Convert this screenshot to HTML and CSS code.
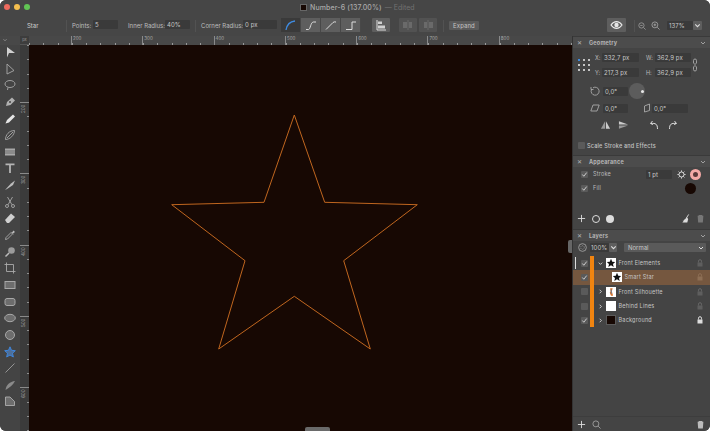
FILE: index.html
```html
<!DOCTYPE html>
<html lang="en">
<head>
    <meta charset="UTF-8">
    <meta name="viewport" content="width=device-width, initial-scale=1.0">
    <title>Number-6</title>
    <link rel="stylesheet" href="styles.css">
</head>
<body>
<div class="window">
    <!-- Title bar -->
    <div class="titlebar">
        <span class="light red"></span>
        <span class="light yellow"></span>
        <span class="light green"></span>
        <span class="doc-icon"></span>
        <span class="doc-name">Number-6 (137.00%)</span>
        <span class="doc-state">— Edited</span>
    </div>

    <!-- Context toolbar -->
    <div class="toolbar">
        <span class="tb-tool">Star</span>
        <span class="tb-sep sep-a"></span>
        <span class="tb-label">Points:</span>
        <span class="field f-points">5</span>
        <span class="tb-label l-inner">Inner Radius:</span>
        <span class="field f-inner">40%</span>
        <span class="tb-sep sep-b"></span>
        <span class="tb-label l-corner">Corner Radius:</span>
        <span class="field f-corner">0 px</span>
        <div class="segments">
            <button class="seg seg-on"><svg viewBox="0 0 20 14"><path d="M5 12C6 6 9 3.500 14 3" class="st-blue"/></svg></button>
            <button class="seg"><svg viewBox="0 0 20 14"><path d="M5 11.500H7.500C9.500 11.500 9.500 4 12.500 4H15" class="st-light"/></svg></button>
            <button class="seg"><svg viewBox="0 0 20 14"><path d="M5 11.500L12 4.500Q13 3.500 15 4" class="st-light"/></svg></button>
            <button class="seg"><svg viewBox="0 0 20 14"><path d="M5 11.500H11V4H15" class="st-light"/></svg></button>
        </div>
        <button class="tb-btn b-align"><svg viewBox="0 0 18 14"><path d="M5 2V12H14" class="st-light"/><rect x="6" y="3.500" width="4" height="2.500" fill="#cfcfcf"/><rect x="6" y="7.500" width="7" height="3" fill="#cfcfcf"/></svg></button>
        <button class="tb-btn b-dim1"><svg viewBox="0 0 18 14"><path d="M9 2V12" class="st-dim"/><rect x="4" y="4" width="4" height="6" fill="#6a6a6a"/><rect x="10" y="4" width="3" height="6" fill="#6a6a6a"/></svg></button>
        <button class="tb-btn b-dim2"><svg viewBox="0 0 18 14"><path d="M9 2V12" class="st-dim"/><rect x="5" y="4" width="3" height="6" fill="#6a6a6a"/><rect x="10" y="4" width="4" height="6" fill="#6a6a6a"/></svg></button>
        <span class="tb-sep sep-c"></span>
        <button class="tb-text-btn">Expand</button>
        <span class="tb-spacer"></span>
        <button class="tb-btn b-eye"><svg viewBox="0 0 19 14"><path d="M4 7C7 2.500 12 2.500 15 7C12 11.500 7 11.500 4 7Z" fill="none" stroke="#e6e6e6" stroke-width="1.200"/><circle cx="9.500" cy="7" r="2.200" fill="#e6e6e6"/></svg></button>
        <span class="tb-sep sep-d"></span>
        <svg class="zoom-ico z-out" viewBox="0 0 10 10"><circle cx="4.300" cy="4.300" r="3.300" class="st-mid"/><path d="M7 7L9.500 9.500M2.800 4.300H5.800" class="st-mid"/></svg>
        <svg class="zoom-ico z-in" viewBox="0 0 10 10"><circle cx="4.300" cy="4.300" r="3.300" class="st-mid"/><path d="M7 7L9.500 9.500M2.800 4.300H5.800M4.300 2.800V5.800" class="st-mid"/></svg>
        <span class="field f-zoom">137%</span>
        <span class="drop-btn"><svg viewBox="0 0 8 8"><path d="M2 3L4 5L6 3" class="st-light"/></svg></span>
    </div>

    <div class="workspace">
        <!-- Tools -->
        <div class="tools-col">
            <div class="tools-head"><svg viewBox="0 0 8 5"><path d="M2 1.500L4 3.500L6 1.500" class="st-mid"/></svg></div>
            <div class="tools">
                <svg viewBox="0 0 12 12"><path d="M3 1L11 7H3Z M3 7V11.500L5 7" fill="#d0d0d0"/></svg>
                <svg viewBox="0 0 12 12"><path d="M3 1L10 7.500L3 11Z" class="st-mid"/></svg>
                <svg viewBox="0 0 12 12"><ellipse cx="6" cy="5" rx="5" ry="3.500" class="st-mid"/><path d="M4 8.500L3.500 11" class="st-mid"/></svg>
                <svg viewBox="0 0 12 12"><path d="M2 10L3 6L8 1.500L11 4.500L6.500 9Z" fill="#b0b0b0"/><circle cx="6" cy="6" r="1" fill="#444"/></svg>
                <svg viewBox="0 0 12 12"><path d="M1.500 10.500L3 7L9 1.500L11 3.500L5 9.500Z" fill="#e6e6e6"/></svg>
                <svg viewBox="0 0 12 12"><path d="M1.500 10.500C1.500 6 5 1.500 10.500 1.500C10.500 6 6 10.500 1.500 10.500Z" class="st-mid"/><path d="M3 9L9 3" class="st-mid"/></svg>
                <svg viewBox="0 0 12 12"><rect x="1" y="2.500" width="10" height="7" fill="#a8a8a8"/><path d="M1 5H11M1 7H11" stroke="#555" stroke-width=".7"/></svg>
                <svg viewBox="0 0 12 12"><path d="M1.500 1.500H10.500V3.200H6.900V11H5.100V3.200H1.500Z" fill="#b4b4b4"/></svg>
                <svg viewBox="0 0 12 12"><path d="M1 11L7 4.500L11 1.500L9 6L3 10Z" fill="#bdbdbd"/></svg>
                <svg viewBox="0 0 12 12"><circle cx="3" cy="10" r="1.500" class="st-mid"/><circle cx="9" cy="10" r="1.500" class="st-mid"/><path d="M4 8.800L8.500 1M8 8.800L3.500 1" class="st-mid"/></svg>
                <svg viewBox="0 0 12 12"><path d="M1 8L7 1.500L11 5L5 11H3Z" fill="#cfcfcf"/></svg>
                <svg viewBox="0 0 12 12"><path d="M1.500 10.500L2 8.500L7 3.500L8.500 5L3.500 10Z" class="st-mid"/><path d="M6.500 2.500L8 3.500L9.500 1.500L11 3L9 4.500L10 6Z" fill="#bbb"/></svg>
                <svg viewBox="0 0 12 12"><circle cx="7.500" cy="4.500" r="3.300" fill="#9c9c9c"/><path d="M5 7L1.500 10.500" stroke="#bbb" stroke-width="1.500" fill="none"/></svg>
                <svg viewBox="0 0 12 12"><path d="M2.500 0.500V9.500H11.500M0.500 2.500H9.500V11.500" class="st-mid"/></svg>
                <svg viewBox="0 0 12 12"><rect x="1" y="2.500" width="10" height="7" fill="#6d6d6d" stroke="#a8a8a8"/></svg>
                <svg viewBox="0 0 12 12"><rect x="1" y="2.500" width="10" height="7" rx="2" fill="#6d6d6d" stroke="#a8a8a8"/></svg>
                <svg viewBox="0 0 12 12"><ellipse cx="6" cy="6" rx="5.300" ry="3.700" fill="#6d6d6d" stroke="#a8a8a8"/></svg>
                <svg viewBox="0 0 12 12"><circle cx="6" cy="6" r="4.500" fill="#6d6d6d" stroke="#a8a8a8"/></svg>
                <svg viewBox="0 0 12 12"><path d="M6 .8L7.500 4.300L11.300 4.700L8.500 7.200L9.300 11L6 9L2.700 11L3.500 7.200L.7 4.700L4.500 4.300Z" fill="#4e6f99" stroke="#3f86dc" stroke-width="1"/></svg>
                <svg viewBox="0 0 12 12"><path d="M1.500 10.500L10.500 1.500" stroke="#a8a8a8" stroke-width=".8" fill="none"/></svg>
                <svg viewBox="0 0 12 12"><path d="M1.500 11C2 6 6 2.500 11 2C9 6 6 8 1.500 11Z" fill="#8a8a8a"/></svg>
                <svg viewBox="0 0 12 12"><path d="M1.500 2H6L10.500 6.500V10.500H1.500Z" fill="#6d6d6d" stroke="#b8b8b8" stroke-width=".8"/></svg>
            </div>
        </div>

        <!-- Canvas with rulers -->
        <div class="stage">
            <div class="ruler-top">
                <span class="ruler-px">px</span>
                <div class="hticks">
                    <span>200</span><span>300</span><span>400</span><span>500</span><span>600</span><span>700</span><span>800</span>
                </div>
            </div>
            <div class="stage-body">
                <div class="ruler-left">
                    <span>200</span><span>300</span><span>400</span><span>500</span><span>600</span>
                </div>
                <div class="canvas">
                    <svg class="artwork" viewBox="0 0 543 386">
                        <path class="star" d="M265.300 70L295.700 157.300L388.300 159.700L314.700 215.700L341.300 304L265.300 251.300L189.700 304L216 215.700L142.700 159.700L235 157.300Z"/>
                    </svg>
                    <span class="scroll-handle"></span>
                    <span class="panel-handle"></span>
                </div>
            </div>
        </div>

        <!-- Right panels -->
        <div class="panels">
            <div class="panel-head"><span class="x">✕</span><span class="panel-title">Geometry</span><svg viewBox="0 0 8 8"><path d="M2 3L4 5L6 3" class="st-mid"/></svg></div>
            <div class="geometry">
                <div class="geo-top">
                    <div class="anchor">
                        <i class="on"></i><i></i><i></i><i></i><i></i><i></i><i></i><i></i><i></i>
                    </div>
                    <div class="geo-fields">
                        <label>X:</label><span class="field">332,7 px</span><label>W:</label><span class="field">362,9 px</span>
                        <label>Y:</label><span class="field">217,3 px</span><label>H:</label><span class="field">362,9 px</span>
                    </div>
                    <svg class="link" viewBox="0 0 6 14"><path d="M1.500 5.500V2.500A1.500 1.500 0 0 1 4.500 2.500V5.500M1.500 8.500V11.500A1.500 1.500 0 0 0 4.500 11.500V8.500M3 5V9" class="st-mid"/></svg>
                </div>
                <div class="geo-rot">
                    <svg viewBox="0 0 10 10"><path d="M3 1.800A4 4 0 1 1 1.500 3.500M1 1V3.500H3.500" class="st-mid"/></svg>
                    <span class="field">0,0°</span>
                    <span class="knob"><i></i></span>
                </div>
                <div class="geo-shear">
                    <svg viewBox="0 0 10 10"><path d="M.8 8L3 2H9.200L7 8Z" class="st-mid"/></svg>
                    <span class="field">0,0°</span>
                    <svg class="shear2" viewBox="0 0 10 10"><path d="M2.500 3L7.500 1V7.500L2.500 9Z" class="st-mid"/></svg>
                    <span class="field">0,0°</span>
                </div>
                <div class="geo-flip">
                    <svg viewBox="0 0 12 10"><path d="M5.500 1V9H1Z" fill="#999"/><path d="M6.500 1V9H11Z" fill="#ccc"/></svg>
                    <svg viewBox="0 0 12 10"><path d="M1 4.500V1L11 4.500Z" fill="#ccc"/><path d="M1 5.500V9L11 5.500Z" fill="#999"/></svg>
                    <svg class="gap" viewBox="0 0 10 10"><path d="M3 1L1 3.500L3.500 4.500M1.500 3.500C6 3 8 4 8 9" class="st-light"/></svg>
                    <svg viewBox="0 0 10 10"><path d="M7 1L9 3.500L6.500 4.500M8.500 3.500C4 3 2 4 2 9" class="st-light"/></svg>
                </div>
                <div class="scale-row"><span class="check"></span>Scale Stroke and Effects</div>
            </div>

            <div class="panel-head"><span class="x">✕</span><span class="panel-title">Appearance</span><svg viewBox="0 0 8 8"><path d="M2 3L4 5L6 3" class="st-mid"/></svg></div>
            <div class="appearance">
                <div class="app-row">
                    <span class="check ticked"><svg viewBox="0 0 8 8"><path d="M1.500 4L3.200 6L6.500 1.800" class="st-light"/></svg></span>
                    <span class="app-name">Stroke</span>
                    <span class="field">1 pt</span>
                    <svg class="gear" viewBox="0 0 10 10"><circle cx="5" cy="5" r="2.800" fill="none" stroke="#ddd" stroke-width="1.100"/><path d="M5 .5V2M5 8V9.500M.5 5H2M8 5H9.500M1.800 1.800L2.900 2.900M7.100 7.100L8.200 8.200M1.800 8.200L2.900 7.100M7.100 2.900L8.200 1.800" stroke="#ddd" stroke-width="1.100"/></svg>
                    <span class="swatch ring"></span>
                </div>
                <div class="app-row">
                    <span class="check ticked"><svg viewBox="0 0 8 8"><path d="M1.500 4L3.200 6L6.500 1.800" class="st-light"/></svg></span>
                    <span class="app-name">Fill</span>
                    <span class="swatch dark"></span>
                </div>
                <div class="app-foot">
                    <svg viewBox="0 0 10 10"><path d="M5 1V9M1 5H9" class="st-light"/></svg>
                    <span class="mini-ring"></span>
                    <span class="mini-disc"></span>
                    <span class="tb-spacer"></span>
                    <svg viewBox="0 0 10 10"><path d="M8.500 .5L6 4.500" class="st-light"/><path d="M6.500 3.500L8 5.500L7 9.500H1.500L3.500 7L1.500 7.500C4 6.500 5 5 6.500 3.500Z" fill="#ddd"/></svg>
                    <svg class="trash" viewBox="0 0 10 10"><path d="M3 1H7V2H8.200L7.600 9.500H2.400L1.800 2H3Z" fill="#777"/></svg>
                </div>
            </div>

            <div class="panel-head"><span class="x">✕</span><span class="panel-title">Layers</span><svg viewBox="0 0 8 8"><path d="M2 3L4 5L6 3" class="st-mid"/></svg></div>
            <div class="layer-opts">
                <svg viewBox="0 0 10 10"><circle cx="5" cy="5" r="4.300" class="st-mid"/><circle cx="5" cy="5" r="2" fill="none" stroke="#aaa" stroke-width=".8" stroke-dasharray="1 1"/></svg>
                <span class="field f-opacity">100%</span>
                <span class="drop-btn"><svg viewBox="0 0 8 8"><path d="M2 3L4 5L6 3" class="st-light"/></svg></span>
                <span class="blend">Normal<svg viewBox="0 0 8 8"><path d="M2 3L4 5L6 3" class="st-light"/></svg></span>
            </div>
            <div class="layers">
                <div class="layer">
                    <span class="active-mark"></span>
                    <span class="check ticked"><svg viewBox="0 0 8 8"><path d="M1.500 4L3.200 6L6.500 1.800" class="st-light"/></svg></span>
                    <span class="tag"></span>
                    <svg class="arrow" viewBox="0 0 8 8"><path d="M2 3L4 5L6 3" class="st-light"/></svg>
                    <span class="thumb"><svg viewBox="0 0 12 12"><path d="M6 1L7.500 4.500L11 4.800L8.400 7.100L9.200 10.800L6 8.800L2.800 10.800L3.600 7.100L1 4.800L4.500 4.500Z" fill="#111"/></svg></span>
                    <span class="layer-name">Front Elements</span>
                    <svg class="lock" viewBox="0 0 8 8"><path d="M2.500 3.500V2.200A1.500 1.500 0 0 1 5.500 2.200V3.500" class="st-dim"/><rect x="1.500" y="3.500" width="5" height="4" fill="#5e5e5e"/></svg>
                </div>
                <div class="layer selected">
                    <span class="check ticked"><svg viewBox="0 0 8 8"><path d="M1.500 4L3.200 6L6.500 1.800" class="st-light"/></svg></span>
                    <span class="tag"></span>
                    <span class="indent"></span>
                    <span class="thumb"><svg viewBox="0 0 12 12"><path d="M6 1L7.500 4.500L11 4.800L8.400 7.100L9.200 10.800L6 8.800L2.800 10.800L3.600 7.100L1 4.800L4.500 4.500Z" fill="#111"/></svg></span>
                    <span class="layer-name">Smart Star</span>
                    <svg class="lock" viewBox="0 0 8 8"><path d="M2.500 3.500V2.200A1.500 1.500 0 0 1 5.500 2.200V3.500" stroke="#8d6f55" fill="none"/><rect x="1.500" y="3.500" width="5" height="4" fill="#8d6f55"/></svg>
                </div>
                <div class="layer">
                    <span class="check"></span>
                    <span class="tag"></span>
                    <svg class="arrow" viewBox="0 0 8 8"><path d="M3 2L5 4L3 6" class="st-light"/></svg>
                    <span class="thumb"><svg viewBox="0 0 12 12"><path d="M5 1.500H8L7 5L8.500 10.500H6L4.500 7L5.500 5Z" fill="#d9742b"/><path d="M6 3L6.500 8" stroke="#4d7fb3" stroke-width="1"/></svg></span>
                    <span class="layer-name">Front Silhouette</span>
                    <svg class="lock" viewBox="0 0 8 8"><path d="M2.500 3.500V2.200A1.500 1.500 0 0 1 5.500 2.200V3.500" class="st-dim"/><rect x="1.500" y="3.500" width="5" height="4" fill="#5e5e5e"/></svg>
                </div>
                <div class="layer">
                    <span class="check"></span>
                    <span class="tag"></span>
                    <svg class="arrow" viewBox="0 0 8 8"><path d="M3 2L5 4L3 6" class="st-light"/></svg>
                    <span class="thumb"></span>
                    <span class="layer-name">Behind Lines</span>
                    <svg class="lock" viewBox="0 0 8 8"><path d="M2.500 3.500V2.200A1.500 1.500 0 0 1 5.500 2.200V3.500" class="st-dim"/><rect x="1.500" y="3.500" width="5" height="4" fill="#5e5e5e"/></svg>
                </div>
                <div class="layer">
                    <span class="check ticked"><svg viewBox="0 0 8 8"><path d="M1.500 4L3.200 6L6.500 1.800" class="st-light"/></svg></span>
                    <span class="tag"></span>
                    <svg class="arrow" viewBox="0 0 8 8"><path d="M3 2L5 4L3 6" class="st-light"/></svg>
                    <span class="thumb thumb-dark"></span>
                    <span class="layer-name">Background</span>
                    <svg class="lock" viewBox="0 0 8 8"><path d="M2.500 3.500V2.200A1.500 1.500 0 0 1 5.500 2.200V3.500" class="st-light"/><rect x="1.500" y="3.500" width="5" height="4" fill="#ddd"/></svg>
                </div>
            </div>
            <div class="layers-foot">
                <svg viewBox="0 0 10 10"><path d="M5 1V9M1 5H9" class="st-light"/></svg>
                <svg viewBox="0 0 10 10"><circle cx="4.300" cy="4.300" r="3.300" class="st-mid"/><path d="M6.800 6.800L9.500 9.500" class="st-mid"/></svg>
                <span class="tb-spacer"></span>
                <svg viewBox="0 0 10 10"><path d="M3 1H7V2H8.200L7.600 9.500H2.400L1.800 2H3Z" fill="#bbb"/></svg>
            </div>
        </div>
    </div>
</div>
</body>
</html>
```

FILE: styles.css
```css
/* Reset */
* {
    margin: 0;
    padding: 0;
    box-sizing: border-box;
}

body {
    width: 710px;
    height: 431px;
    overflow: hidden;
    background-color: #fff;
    font-family: "Inter", "Liberation Sans", sans-serif;
    font-size: 6px;
    color: #cfcfcf;
}

svg {
    display: block;
    flex: none;
}

button {
    border: none;
    font-family: inherit;
    color: inherit;
}

/* Shared strokes */
.st-light { fill: none; stroke: #dcdcdc; stroke-width: 1; }
.st-mid { fill: none; stroke: #a9a9a9; stroke-width: .9; }
.st-dim { fill: none; stroke: #686868; stroke-width: 1; }
.st-blue { fill: none; stroke: #3f8be0; stroke-width: 1.300; }

.window {
    width: 710px;
    height: 431px;
    border-radius: 6px;
    overflow: hidden;
    background-color: #444;
    display: flex;
    flex-direction: column;
}

/* Title bar */
.titlebar {
    height: 18px;
    flex: none;
    display: flex;
    align-items: center;
    padding: 0 0 4px 4px;
    background-color: #464646;
    font-size: 7px;
}

.light {
    width: 6px;
    height: 6px;
    border-radius: 50%;
    margin-right: 4px;
    flex: none;
}

.red { background-color: #ed6a5e; }
.yellow { background-color: #f4bf4f; }
.green { background-color: #61c554; }

.doc-icon {
    width: 7px;
    height: 7px;
    margin-left: 266px;
    background-color: #170803;
    border: 1px solid #666;
}

.doc-name {
    margin-left: 3px;
    color: #a9a9a9;
    font-weight: 500;
    letter-spacing: .12px;
}

.doc-state {
    margin-left: 3px;
    color: #717171;
}

/* Context toolbar */
.toolbar {
    height: 18px;
    flex: none;
    display: flex;
    align-items: flex-start;
    background-color: #464646;
}

.tb-tool {
    margin-left: 27px;
    margin-top: 4px;
    width: 11px;
}

.tb-label {
    margin-top: 4px;
    font-size: 6px;
    color: #bdbdbd;
    white-space: nowrap;
    margin-left: 5px;
    width: 19px;
}

.l-inner { margin-left: 10px; width: 36px; }
.l-corner { margin-left: 5px; width: 41px; }

.tb-sep {
    width: 1px;
    height: 12px;
    margin-top: 2px;
    background-color: #525252;
}

.sep-a { margin-left: 28px; }
.sep-b { margin-left: 5px; }
.sep-c { margin-left: 6px; }
.sep-d { margin-left: 8px; }

.field {
    display: block;
    height: 9px;
    line-height: 9px;
    padding-left: 2px;
    background-color: #3a3a3a;
    border-radius: 1px;
    font-size: 6px;
    color: #c8c8c8;
    white-space: nowrap;
    letter-spacing: .1px;
}

.f-points { width: 25px; margin-left: 2px; margin-top: 2px; }
.f-inner { width: 25px; margin-left: 1px; margin-top: 2px; }
.f-corner { width: 34px; margin-left: 1px; margin-top: 2px; }

.segments {
    display: flex;
    margin-left: 4px;
    height: 14px;
}

.seg {
    width: 20px;
    height: 14px;
    background-color: #5e5e5e;
    border-right: 1px solid #484848;
}

.seg-on {
    background-color: #3a3a3a;
}

.seg svg {
    width: 20px;
    height: 14px;
}

.tb-btn {
    height: 14px;
    background-color: #5e5e5e;
    border-radius: 1px;
}

.tb-btn svg {
    width: 100%;
    height: 14px;
}

.b-align { width: 18px; margin-left: 11px; }
.b-dim1 { width: 18px; margin-left: 9px; background-color: #525252; }
.b-dim2 { width: 18px; margin-left: 2px; background-color: #525252; }

.tb-text-btn {
    width: 30px;
    height: 9px;
    margin-top: 3px;
    margin-left: 5px;
    background-color: #5a5a5a;
    border-radius: 1px;
    font-size: 6px;
    color: #c4c4c4;
    letter-spacing: .1px;
}

.tb-spacer {
    flex: 1;
}

.b-eye { width: 19px; }

.zoom-ico {
    width: 9px;
    height: 9px;
    margin-top: 3px;
}

.z-out { margin-left: 3px; width: 8px; height: 8px; margin-top: 4px; }
.z-in { margin-left: 5px; }

.f-zoom {
    width: 26px;
    margin-top: 3px;
    margin-left: 7px;
}

.drop-btn {
    display: block;
    width: 9px;
    height: 9px;
    background-color: #5e5e5e;
    border-radius: 1px;
    margin-top: 3px;
    margin-right: 8px;
}

.drop-btn svg {
    width: 9px;
    height: 9px;
}

/* Workspace */
.workspace {
    flex: 1;
    display: flex;
    min-height: 0;
}

.tools-col {
    width: 20px;
    flex: none;
    background-color: #444;
}

.tools-head {
    height: 9px;
    background-color: #484848;
    padding: 2px 0 0 2px;
}

.tools-head svg {
    width: 6px;
    height: 4px;
}

.tools {
    display: flex;
    flex-direction: column;
    align-items: center;
    gap: 4.650px;
    padding-top: 1px;
}

.tools svg {
    width: 12px;
    height: 12px;
}

.stage {
    flex: 1;
    min-width: 0;
    display: flex;
    flex-direction: column;
}

.ruler-top {
    height: 9px;
    flex: none;
    display: flex;
    background-color: #484848;
}

.ruler-px {
    width: 9px;
    flex: none;
    font-size: 4px;
    line-height: 7px;
    text-align: center;
    color: #999;
    background-color: #3d3d3d;
    border-bottom: 1px solid #555;
}

.hticks {
    flex: 1;
    display: flex;
    padding-left: 42px;
    overflow: hidden;
    background-image: repeating-linear-gradient(90deg, #9a9a9a 0 1px, transparent 1px 14.260px);
    background-size: 100% 2px;
    background-position: 0 7px;
    background-repeat: no-repeat;
}

.hticks span {
    width: 71.300px;
    flex: none;
    padding-left: 1px;
    font-size: 4.500px;
    line-height: 6px;
    color: #aaa;
    border-left: 1px solid #8a8a8a;
    height: 9px;
}

.stage-body {
    flex: 1;
    min-height: 0;
    display: flex;
}

.ruler-left {
    width: 9px;
    flex: none;
    padding-top: 57px;
    display: flex;
    flex-direction: column;
    gap: 60.300px;
    background-color: #3b3b3b;
    background-image: repeating-linear-gradient(180deg, #8f8f8f 0 1px, transparent 1px 14.260px);
    background-size: 2px 100%;
    background-position: right 0;
    background-repeat: no-repeat;
}

.ruler-left span {
    height: 11px;
    flex: none;
    writing-mode: vertical-rl;
    transform: rotate(180deg);
    font-size: 4.500px;
    line-height: 7px;
    color: #aaa;
    text-align: left;
    border-left: 0;
    border-bottom: 1px solid #8a8a8a;
}

.canvas {
    flex: 1;
    position: relative;
    background-color: #170803;
}

.artwork {
    width: 543px;
    height: 386px;
}

.star {
    fill: none;
    stroke: #c0661f;
    stroke-width: 1;
}

.scroll-handle {
    position: absolute;
    left: 276px;
    bottom: 0;
    width: 25px;
    height: 4px;
    border-radius: 2px 2px 0 0;
    background-color: #6a6a6a;
}

.panel-handle {
    position: absolute;
    right: 0;
    top: 195px;
    width: 4px;
    height: 13px;
    border-radius: 2px 0 0 2px;
    background-color: #666;
}

/* Right panels */
.panels {
    width: 138px;
    flex: none;
    display: flex;
    flex-direction: column;
    background-color: #444;
    border-left: 1px solid #333;
}

.panel-head {
    height: 12px;
    flex: none;
    display: flex;
    align-items: center;
    padding: 0 3px 0 4px;
    background-color: #4c4c4c;
    border-top: 1px solid #3a3a3a;
}

.panel-head .x {
    width: 8px;
    font-size: 6px;
    color: #b5b5b5;
    margin-right: 4px;
}

.panel-title {
    flex: 1;
    font-weight: 700;
    font-size: 5.500px;
    letter-spacing: .2px;
    color: #b5b5b5;
}

.panel-head svg {
    width: 8px;
    height: 8px;
}

/* Geometry */
.geometry {
    height: 107px;
    flex: none;
    padding-top: 5px;
}

.geo-top {
    display: flex;
    align-items: center;
    padding-left: 5px;
}

.anchor {
    width: 12px;
    height: 12px;
    display: grid;
    grid-template-columns: repeat(3, 2px);
    grid-template-rows: repeat(3, 2px);
    gap: 3px;
}

.anchor i {
    width: 2px;
    height: 2px;
    background-color: #c4c4c4;
}

.anchor .on {
    background-color: #3f8be0;
}

.geo-fields {
    margin-left: 5px;
    display: grid;
    grid-template-columns: 7px 44px 9px 36px;
    grid-auto-rows: 9px;
    row-gap: 6px;
    align-items: center;
}

.geo-fields label {
    font-size: 5.500px;
    color: #bdbdbd;
}

.geo-fields .field:nth-child(2),
.geo-fields .field:nth-child(6) {
    width: 37px;
}

.link {
    width: 6px;
    height: 14px;
    margin-left: 1px;
}

.geo-rot,
.geo-shear {
    display: flex;
    align-items: center;
    padding-left: 17px;
}

.geo-rot {
    margin-top: 6px;
    height: 16px;
}

.geo-rot svg,
.geo-shear svg {
    width: 10px;
    height: 10px;
}

.geo-rot .field,
.geo-shear .field {
    width: 25px;
    margin-left: 3px;
}

.knob {
    width: 16px;
    height: 16px;
    margin-left: 1px;
    border-radius: 50%;
    background-color: #5c5c5c;
    display: flex;
    align-items: center;
    justify-content: flex-end;
    padding-right: 1px;
}

.knob i {
    width: 3px;
    height: 3px;
    border-radius: 50%;
    background-color: #e8e8e8;
}

.geo-shear {
    margin-top: 4px;
    height: 10px;
}

.shear2 {
    margin-left: 14px;
}

.geo-shear .field:last-child {
    width: 36px;
    margin-left: 0;
}

.geo-flip {
    display: flex;
    align-items: center;
    padding-left: 27px;
    margin-top: 7px;
    gap: 7px;
    height: 10px;
}

.geo-flip svg {
    width: 11px;
    height: 10px;
}

.geo-flip .gap {
    margin-left: 13px;
}

.scale-row {
    display: flex;
    align-items: center;
    gap: 2px;
    margin-top: 12px;
    padding-left: 5px;
    font-size: 5.500px;
    letter-spacing: .2px;
    color: #c4c4c4;
    font-weight: 500;
}

.check {
    display: block;
    width: 7px;
    height: 7px;
    flex: none;
    border-radius: 1px;
    background-color: #5a5a5a;
}

.check svg {
    width: 7px;
    height: 7px;
}

/* Appearance */
.appearance {
    height: 62px;
    flex: none;
    display: flex;
    flex-direction: column;
}

.app-row {
    height: 14px;
    flex: none;
    display: flex;
    align-items: center;
    padding-left: 8px;
}

.app-name {
    margin-left: 5px;
    width: 53px;
    flex: none;
    color: #bdbdbd;
    font-size: 5.500px;
    letter-spacing: .2px;
}

.app-row .field {
    width: 26px;
}

.gear {
    width: 9px;
    height: 9px;
    margin-left: 5px;
}

.swatch {
    width: 11px;
    height: 11px;
    border-radius: 50%;
    margin-left: 4px;
}

.ring {
    background-color: #5a3a3a;
    border: 3px solid #f4a9a6;
}

.dark {
    background-color: #170803;
    margin-left: 39px;
}

.app-foot {
    margin-top: auto;
    margin-bottom: 6px;
    display: flex;
    align-items: center;
    gap: 6px;
    padding: 0 5px 0 4px;
}

.app-foot svg {
    width: 9px;
    height: 9px;
}

.mini-ring {
    width: 8px;
    height: 8px;
    border-radius: 50%;
    border: 1.500px solid #dcdcdc;
}

.mini-disc {
    width: 8px;
    height: 8px;
    border-radius: 50%;
    background-color: #dcdcdc;
}

/* Layers */
.layer-opts {
    height: 13px;
    flex: none;
    display: flex;
    align-items: center;
    padding-left: 5px;
}

.layer-opts > svg {
    width: 9px;
    height: 9px;
}

.f-opacity {
    width: 19px;
    margin-left: 3px;
    padding-left: 1px;
}

.layer-opts .drop-btn {
    margin: 0 6px 0 0;
    width: 8px;
}

.blend {
    display: flex;
    align-items: center;
    justify-content: space-between;
    width: 82px;
    height: 9px;
    margin-left: 1px;
    padding: 0 1px 0 4px;
    background-color: #5a5a5a;
    border-radius: 1px;
    color: #c8c8c8;
    font-size: 6px;
}

.blend svg {
    width: 8px;
    height: 8px;
}

.layers {
    flex: none;
    margin-top: 2px;
}

.layer {
    position: relative;
    height: 14.300px;
    display: flex;
    align-items: center;
    padding-left: 8px;
}

.selected {
    background-color: #75573f;
}

.active-mark {
    position: absolute;
    left: 2px;
    top: 1px;
    bottom: 1px;
    width: 1px;
    background-color: #ddd;
}

.tag {
    width: 3.500px;
    height: 100%;
    margin-left: 2px;
    flex: none;
    background-color: #f08410;
}

.arrow {
    width: 7px;
    height: 7px;
    margin-left: 3px;
}

.indent {
    width: 16px;
    flex: none;
}

.thumb {
    width: 10px;
    height: 10px;
    flex: none;
    margin-left: 2px;
    background-color: #fff;
}

.thumb svg {
    width: 10px;
    height: 10px;
}

.thumb-dark {
    background-color: #170803;
    border: 1px solid #5a5a5a;
}

.layer-name {
    margin-left: 3px;
    color: #c6c6c6;
    font-size: 5.500px;
    letter-spacing: .22px;
    white-space: nowrap;
}

.lock {
    position: absolute;
    right: 6px;
    top: 3px;
    width: 8px;
    height: 8px;
}

.layers-foot {
    margin-top: auto;
    height: 15px;
    flex: none;
    display: flex;
    align-items: center;
    gap: 6px;
    padding: 0 5px 0 4px;
    border-top: 1px solid #3d3d3d;
}

.layers-foot svg {
    width: 9px;
    height: 9px;
}
```
